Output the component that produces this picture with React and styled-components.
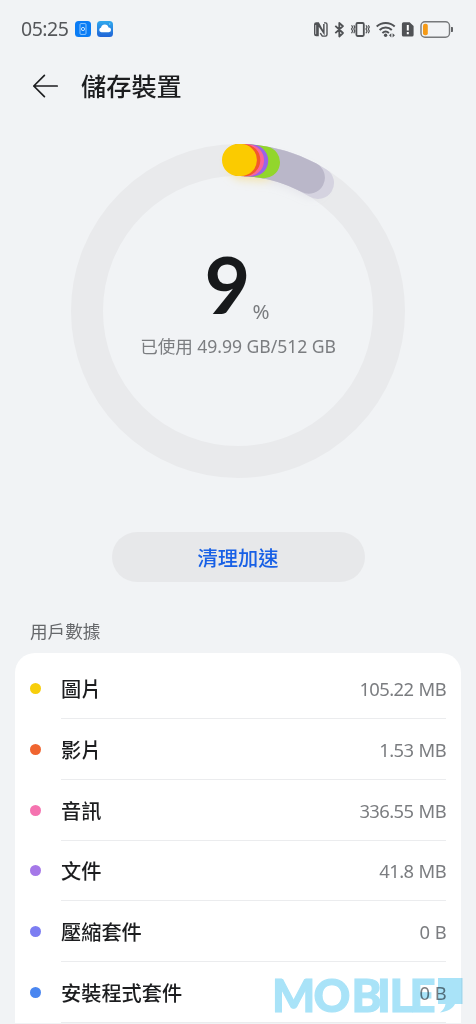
import styled, { createGlobalStyle } from "styled-components";

const GlobalStyle = createGlobalStyle`
  * {
    box-sizing: border-box;
  }

  body {
    margin: 0;
    overflow: hidden;
    background: #f1f3f5;
    font-family: "Noto Sans", "Noto Sans CJK TC", sans-serif;
    color: #1c1d1f;
  }
`

const Screen = styled.div`
  position: relative;
  display: flex;
  flex-direction: column;
  width: 476px;
  height: 1024px;
  overflow: hidden;
  background: #f1f3f5;

  > * {
    flex: none;
  }
`

const StatusBar = styled.div`
  display: flex;
  justify-content: space-between;
  align-items: center;
  height: 57px;
  padding: 0 22px 0 21px;
`

const StatusGroup = styled.div`
  display: flex;
  align-items: center;
  gap: ${({ $gap }) => $gap}px;
`

const Clock = styled.span`
  width: 48px;
  font-size: 19.5px;
  letter-spacing: -0.5px;
  color: #55575a;
  white-space: nowrap;
`

const Header = styled.header`
  display: flex;
  align-items: center;
  gap: 22px;
  height: 58px;
  padding-left: 32px;
`

const Title = styled.h1`
  margin: 0;
  font-size: 25.2px;
  font-weight: 500;
  line-height: 36px;
`

const Gauge = styled.section`
  display: grid;
  width: 340px;
  height: 340px;
  margin: 26px auto 0;

  > * {
    grid-area: 1 / 1;
  }
`

const Summary = styled.div`
  display: flex;
  flex-direction: column;
  align-items: center;
  padding-top: 95px;
  color: #7b7d80;
`

const Percent = styled.div`
  display: flex;
  align-items: baseline;
  gap: 4px;
  height: 97px;
  line-height: 96px;
`

const PercentValue = styled.span`
  font-family: Lato, sans-serif;
  font-size: 79px;
  font-weight: 700;
  color: #17191b;
`

const PercentSign = styled.span`
  position: relative;
  top: 5px;
  left: -2px;
  font-size: 20.5px;
`

const Usage = styled.div`
  font-size: 17.6px;
  line-height: 26px;
  letter-spacing: ${({ $tracking }) => $tracking}px;
  white-space: nowrap;
`

const CleanButton = styled.button`
  align-self: center;
  width: 253px;
  height: 50px;
  margin-top: 51px;
  padding: 0;
  border: none;
  border-radius: 25px;
  background: #e7e8ea;
  color: #1860e6;
  font-family: inherit;
  font-size: 20.2px;
  font-weight: 500;
`

const SectionTitle = styled.h2`
  margin: 36px 0 0 30px;
  font-size: 17.6px;
  font-weight: 400;
  line-height: 26px;
  color: #66686b;
`

const Card = styled.ul`
  margin: 9px 15px 0;
  padding: 5px 0 0;
  border-radius: 20px 20px 0 0;
  list-style: none;
  background: #ffffff;
`

const Row = styled.li`
  display: flex;
  align-items: center;
  height: 60.85px;
  padding: 0 15px;
`

const Dot = styled.span`
  width: 11px;
  height: 11px;
  margin-right: 20px;
  border-radius: 50%;
  background: ${({ $color }) => $color};
`

const RowBody = styled.div`
  display: flex;
  flex: 1;
  justify-content: space-between;
  align-items: center;
  height: 100%;
  padding-top: 1px;
  border-bottom: 1px solid #ebecee;
`

const RowLabel = styled.span`
  font-size: 20.2px;
  font-weight: 500;
`

const RowValue = styled.span`
  font-size: 18.4px;
  letter-spacing: -0.6px;
  word-spacing: 1px;
  color: #7b7d80;
`

const Watermark = styled.svg`
  position: absolute;
  left: 270px;
  top: 970px;
  mix-blend-mode: multiply;
`

const CENTER = 170
const RADIUS = 151

// widest arc first, the shorter ones are painted on top of it
const arcs = [
  { color: "#d5d3e0", end: 32 },
  { color: "#bab7c9", end: 28 },
  { color: "#92d62c", end: 9.9 },
  { color: "#9b63e8", end: 5.4 },
  { color: "#fb6499", end: 3.8 },
  { color: "#f25a2b", end: 2.4 },
  { color: "#fbcb00", start: 0, end: 1.1 },
]

const items = [
  { label: "圖片", value: "105.22 MB", color: "#f7ce0b" },
  { label: "影片", value: "1.53 MB", color: "#f06530" },
  { label: "音訊", value: "336.55 MB", color: "#f573b0" },
  { label: "文件", value: "41.8 MB", color: "#a578e8" },
  { label: "壓縮套件", value: "0 B", color: "#7c7df2" },
  { label: "安裝程式套件", value: "0 B", color: "#4a86f0" },
]

function point(deg) {
  const a = (deg * Math.PI) / 180
  return `${CENTER + RADIUS * Math.sin(a)} ${CENTER - RADIUS * Math.cos(a)}`
}

function arcPath(end, start = 1) {
  return `M${point(start)}A${RADIUS} ${RADIUS} 0 0 1 ${point(end)}`
}

function Ring() {
  return (
    <svg width="340" height="340" viewBox="0 0 340 340" fill="none">
      <defs>
        <filter id="glow" x="100" y="-20" width="240" height="140" filterUnits="userSpaceOnUse">
          <feGaussianBlur stdDeviation="4" />
        </filter>
      </defs>
      <circle cx={CENTER} cy={CENTER} r={RADIUS} stroke="#e9eaec" strokeWidth="32" />
      <g filter="url(#glow)" transform="translate(2 6)" strokeWidth="28" strokeLinecap="round">
        <path d={arcPath(28)} stroke="#bab7c9" opacity="0.22" />
        <path d={arcPath(8)} stroke="#fbe38a" opacity="0.6" />
      </g>
      {arcs.map(({ color, start, end }) => (
        <path key={color} d={arcPath(end, start)} stroke={color} strokeWidth="32" strokeLinecap="round" />
      ))}
    </svg>
  )
}

function PhoneBadge() {
  return (
    <svg width="16" height="16" viewBox="0 0 16 16" fill="none">
      <rect width="16" height="16" rx="3.5" fill="#0a7cf5" />
      <rect x="5" y="2.6" width="6" height="10.8" rx="1" stroke="#9fd0ff" strokeWidth="0.9" />
      <circle cx="8" cy="8" r="1.6" stroke="#d6ebff" strokeWidth="0.9" />
    </svg>
  )
}

function CloudBadge() {
  return (
    <svg width="16" height="16" viewBox="0 0 16 16">
      <defs>
        <linearGradient id="sky" x1="0" y1="0" x2="0" y2="1">
          <stop offset="0" stopColor="#31a9ee" />
          <stop offset="1" stopColor="#1f63d6" />
        </linearGradient>
      </defs>
      <rect width="16" height="16" rx="3.5" fill="url(#sky)" />
      <path d="M4.4 11.3a2.5 2.5 0 0 1-.3-4.9A3.8 3.8 0 0 1 11.5 6.5a2.4 2.4 0 0 1 .3 4.8z" fill="#fff" />
      <circle cx="12.7" cy="3" r=".7" fill="#7fe0f5" />
    </svg>
  )
}

function StatusIcons() {
  return (
    <svg width="142" height="20" viewBox="312 18 142 20" fill="none" stroke="#505255">
      {/* nfc */}
      <path d="M314 23.5a2.200 2.200 0 0 1 2.200-2.200h2.600l4.300 7.800v-6h1.500v11.500l-5.800-8.800v9.400h-2.600a2.200 2.200 0 0 1-2.200-2.200z" fill="#505255" stroke="none" />
      <path d="M315.700 24v9.200" stroke="#e3e5e7" strokeWidth="0.8" />
      <path d="M324 21.900h1.500a1.500 1.500 0 0 1 1.500 1.500v10.200a1.500 1.500 0 0 1-1.500 1.500h-3.200l-2-3" strokeWidth="1.400" />
      {/* bluetooth */}
      <path d="M335.300 24.800l7.700 7.200-3.700 3.500v-13.500l3.700 3.200-7.700 7" strokeWidth="1.800" strokeLinejoin="round" />
      {/* vibrate */}
      <rect x="356.400" y="22" width="7.400" height="13" rx="1.200" strokeWidth="1.800" />
      <path d="M351.500 24.300l1.200 1.700-1.200 2 1.200 2-1.200 2.200M353.800 24.300l1 1.700-1 2 1 2-1 2.200M366 24.300l1.100 1.700-1.100 2 1.100 2-1.100 2.200M368.300 24.300l1 1.700-1 2 1 2-1 2.200" strokeWidth="1.200" />
      {/* wifi */}
      <path d="M376.700 25.600a13.200 13.200 0 0 1 18 0M379.600 28.900a9 9 0 0 1 12.200 0M382.400 31.900a5 5 0 0 1 6.500 0" strokeWidth="2" />
      <circle cx="385.600" cy="34.200" r="1.700" fill="#505255" stroke="none" />
      <path d="M391.300 32.200l-2.300 2.100 2.300 2.100zM392.600 32.200l2.300 2.100-2.300 2.100z" fill="#505255" stroke="none" />
      {/* sim alert */}
      <path d="M403.500 21.300h6.100l4 3.700v9a1.600 1.600 0 0 1-1.600 1.600h-8.500a1.600 1.600 0 0 1-1.600-1.600v-11.100a1.600 1.600 0 0 1 1.600-1.600z" fill="#505255" stroke="none" />
      <path d="M407.800 24v5.600M407.800 31v2.200" stroke="#fff" strokeWidth="2" />
      {/* battery */}
      <rect x="421" y="20.800" width="28.500" height="15.400" rx="4" stroke="#77797b" strokeWidth="1.400" />
      <rect x="423" y="22.700" width="4.800" height="11.600" rx="2" fill="#f59a16" stroke="none" />
      <path d="M451 26h1.200a.8.8 0 0 1 .8.8v3.400a.8.8 0 0 1-.8.8H451z" fill="#606265" stroke="none" />
    </svg>
  )
}

function BackArrow() {
  return (
    <svg width="27" height="26" viewBox="0 0 27 26" fill="none" stroke="#1c1d1f" strokeWidth="1.7" strokeLinecap="round" strokeLinejoin="round">
      <path d="M25.200 13H1.800M12.400 2.400L1.800 13l10.600 10.600" />
    </svg>
  )
}

function App() {
  return (
    <Screen>
      <GlobalStyle />
      <StatusBar>
        <StatusGroup $gap={6}>
          <Clock>05:25</Clock>
          <PhoneBadge />
          <CloudBadge />
        </StatusGroup>
        <StatusIcons />
      </StatusBar>

      <Header>
        <BackArrow />
        <Title>儲存裝置</Title>
      </Header>

      <Gauge>
        <Ring />
        <Summary>
          <Percent>
            <PercentValue>9</PercentValue>
            <PercentSign>%</PercentSign>
          </Percent>
          <Usage $tracking={-0.05}>已使用 49.99 GB/512 GB</Usage>
        </Summary>
      </Gauge>

      <CleanButton>清理加速</CleanButton>

      <SectionTitle>用戶數據</SectionTitle>
      <Card>
        {items.map(({ label, value, color }) => (
          <Row key={label}>
            <Dot $color={color} />
            <RowBody>
              <RowLabel>{label}</RowLabel>
              <RowValue>{value}</RowValue>
            </RowBody>
          </Row>
        ))}
      </Card>

      <Watermark width="200" height="50" viewBox="270 970 200 50" fill="#a9e3f8">
        <text
          x="272 313.5 351.500 377 389.500 409.500"
          y="1011.500"
          fontFamily="Lato"
          fontSize="45.500"
          fontWeight="900"
          stroke="#a9e3f8"
          strokeWidth="1"
        >
          MOBILE
        </text>
        <path d="M438 978h24.500v26h-7.500c-2 4-7 7.500-15 8.500 3-2 5-5 5.500-8.500H438z" />
      </Watermark>
    </Screen>
  )
}

export default App;
